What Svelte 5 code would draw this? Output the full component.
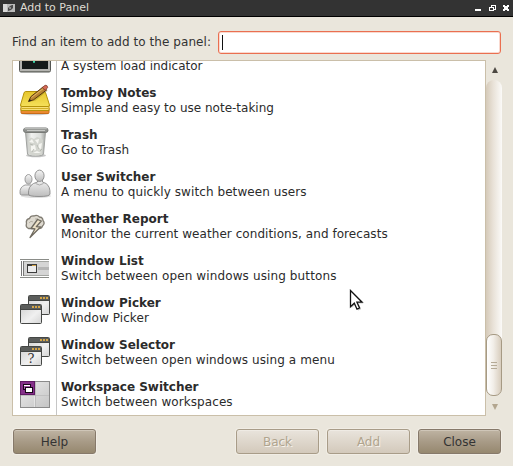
<script>
  const items = [
    { icon: 'monitor', title: '', sub: 'A system load indicator', track: 0 },
    { icon: 'notes', title: 'Tomboy Notes', sub: 'Simple and easy to use note-taking', track: 0 },
    { icon: 'trash', title: 'Trash', sub: 'Go to Trash', track: 0 },
    { icon: 'users', title: 'User Switcher', sub: 'A menu to quickly switch between users', track: 0.08 },
    { icon: 'weather', title: 'Weather Report', sub: 'Monitor the current weather conditions, and forecasts', track: 0.06 },
    { icon: 'winlist', title: 'Window List', sub: 'Switch between open windows using buttons', track: 0.12 },
    { icon: 'windows', title: 'Window Picker', sub: 'Window Picker', track: 0.08 },
    { icon: 'selector', title: 'Window Selector', sub: 'Switch between open windows using a menu', track: 0.09 },
    { icon: 'workspace', title: 'Workspace Switcher', sub: 'Switch between workspaces', track: 0.08 }
  ];
</script>

{#snippet win(x, y)}
  <rect x={x + 0.5} y={y + 0.5} width="21" height="19" rx="1" fill="url(#gWin)" stroke="#454745" />
  <path d="M{x + 1} {y + 1}h20v4h-20z" fill="#5b5d5b" />
  <path d="M{x + 1} {y + 5.5}h20" stroke="#454745" />
  <path d="M{x + 12} {y + 2}h2v2h-2zM{x + 15} {y + 2}h2v2h-2zM{x + 18} {y + 2}h2v2h-2z" fill="#d5a546" />
{/snippet}

<div class="window">
  <header>
    <svg class="appicon" width="12" height="8" viewBox="0 0 12 8">
      <rect width="12" height="8" fill="#b9b9b9" />
      <path d="M0 0h4v8H0z" fill="#d8d8d8" />
      <path d="M5 4l2-2 2-1h1v3L8 6 5 7z" fill="#4a4a4a" />
      <path d="M6 3h2v2H6z" fill="#8d8d8d" />
    </svg>
    <span>Add to Panel</span>
    <svg class="controls" width="34" height="9" viewBox="0 0 34 9" shape-rendering="crispEdges">
      <path d="M0 5h6v2H0z" fill="#fff" />
      <path fill-rule="evenodd" d="M16 1h5v5h-2v1h-5V3h2zM17 2v1h2v2h1V2zM15 4v2h3V4z" fill="#fff" />
      <path d="M28 1h2v1h2V1h2v2h-1v2h1v2h-2V6h-2v1h-2V5h1V3h-1z" fill="#fff" />
    </svg>
  </header>

  <div class="search">
    <label for="find">Find an item to add to the panel:</label>
    <div class="entry" id="find"><i></i></div>
  </div>

  <div class="listwrap">
    <div class="list">
      {#each items as it}
        <div class="row">
          <div class="ico">
            <svg width="32" height="32" viewBox="0 0 32 32">
              <defs>
                <linearGradient id="gWin" x1="0" y1="0" x2="1" y2="1"><stop offset="0" stop-color="#cfcfcf" /><stop offset=".6" stop-color="#f0f0f0" /><stop offset="1" stop-color="#d4d4d4" /></linearGradient>
                <linearGradient id="gUser" x1="0" y1="0" x2="0" y2="1"><stop offset="0" stop-color="#f5f5f5" /><stop offset="1" stop-color="#bdbdbd" /></linearGradient>
                <linearGradient id="gNote" x1="0" y1="0" x2="0" y2="1"><stop offset="0" stop-color="#e6c62c" /><stop offset="1" stop-color="#f5e05a" /></linearGradient>
                <linearGradient id="gCell" x1="0" y1="0" x2="1" y2="1"><stop offset="0" stop-color="#ececec" /><stop offset="1" stop-color="#c4c4c4" /></linearGradient>
                <linearGradient id="gGlass" x1="0" y1="0" x2="1" y2="0"><stop offset="0" stop-color="#b5b7b4" /><stop offset=".3" stop-color="#f1f2f0" /><stop offset=".75" stop-color="#dcdedb" /><stop offset="1" stop-color="#a4a6a3" /></linearGradient>
              </defs>
              {#if it.icon === 'monitor'}
                <rect x="0.5" y="2.5" width="31" height="27.5" rx="1.5" fill="#b4b4b0" stroke="#555753" />
                <rect x="3" y="5" width="26" height="22" fill="#151a19" />
                <path d="M11 18h3l1 3 1-3" fill="none" stroke="#3ad8a8" />
                <path d="M1 29.5h30" stroke="#73756f" />
              {:else if it.icon === 'notes'}
                <ellipse cx="16" cy="29.5" rx="14" ry="1.8" fill="#000" opacity=".2" />
                <path d="M2 24v4.500q0 1 1 1h26q1 0 1-1V24z" fill="#ea8a30" stroke="#c96c18" />
                <path d="M2 21v5.500h28V21z" fill="#f8e078" stroke="#b5930a" />
                <path d="M3 24.500h26" stroke="#d3b126" />
                <path d="M6.500 7.500h18.500q1 0 1.500 1L30.500 21q0 1.500-1.500 1.500H3Q1.500 22.500 1.500 21L5 9q.5-1.500 1.500-1.500z" fill="url(#gNote)" stroke="#b5930a" />
                <path d="M10 17l6-1.500L28 6" fill="none" stroke="#8b7a14" stroke-width="2" opacity=".4" />
                <path d="M9.500 17.500l2.300-4.800L24 3l3.500 3L14.500 15.800z" fill="#b98534" stroke="#4e2c08" stroke-width=".9" />
                <path d="M12.500 13.500L25 4" stroke="#e5b561" />
                <path d="M9.500 17.500l1.200-2.600 1.700 1.500z" fill="#222" />
                <path d="M23.300 3.500l2.800-2.200q2-.6 2.600 2l-2.400 3.200z" fill="#d46a57" stroke="#7c3326" stroke-width=".8" />
              {:else if it.icon === 'trash'}
                <ellipse cx="17" cy="29.500" rx="10" ry="1.800" fill="#000" opacity=".22" />
                <path d="M6.500 6l2 22q.3 2 8 2t8-2l2-22z" fill="url(#gGlass)" stroke="#a1a3a0" />
                <path d="M9 14l3-2.500 3 1.500 3-2 3 1 3 2-1 14.500q-6 1.800-12.500 0z" fill="#d3d5cf" />
                <path d="M10 16l3-3 2 4zM16 14l4-1-1 5zM12 20l4-1 1 5-5 1zM20 18l3-1-1 6-3-1zM14 27l4-2 4 2z" fill="#f5f5f1" />
                <path d="M11 18l3 1M18 19l2 4M13 26l2-3M21 25l2-2" stroke="#aeb1aa" stroke-width=".8" />
                <rect x="4.500" y="2" width="24.500" height="4.500" rx="2.200" fill="#8f918e" stroke="#737572" stroke-width=".9" />
                <path d="M6.500 1.500h20.500l1.500 1.700H5z" fill="#b8bab7" />
                <path d="M8 4.500h18" stroke="#c7c9c6" />
              {:else if it.icon === 'users'}
                <ellipse cx="17" cy="28" rx="15" ry="2" fill="#000" opacity=".12" />
                <path d="M1 25q-.5-6 5-8h6l4 3v7H2.500Q1 27 1 25z" fill="url(#gUser)" stroke="#929292" stroke-width=".9" />
                <ellipse cx="9.500" cy="11.300" rx="3.500" ry="4.800" fill="url(#gUser)" stroke="#929292" stroke-width=".9" />
                <path d="M9.500 26q-.5-7.500 5-10.500l4-1.500v-3h5v3l3.500 1.500q4.500 3 4 10.500 0 2.500-11 2.500T9.500 26z" fill="url(#gUser)" stroke="#898989" stroke-width=".9" />
                <ellipse cx="20.500" cy="7.800" rx="4.600" ry="5.700" fill="url(#gUser)" stroke="#898989" stroke-width=".9" />
                <path d="M16.500 15.500q4 3 8 0" fill="none" stroke="#a9a9a9" />
              {:else if it.icon === 'weather'}
                <path d="M9.500 18.500Q6.300 17 7.500 13.500 6.500 9.500 10.500 8.500 11.500 5.500 15 6q3-1.700 5.500 1 3.300.2 3.500 3.500 2.500 2.800-.5 5.500-.7 2.500-3.500 2.500z" fill="#dedad0" stroke="#807c72" stroke-width="1.300" />
                <path d="M10 13q2-3 4-1M16 9q3-1 4 1" fill="none" stroke="#b5b0a4" />
                <path d="M18.500 9.500L12 18.500l4 .3-5 8.700L21.500 17l-4.200-.3 5-5.700z" fill="#eee2c8" stroke="#706b60" stroke-width="1.300" stroke-linejoin="round" />
              {:else if it.icon === 'winlist'}
                <path d="M1 7.500h29M1 25.500h29" stroke="#8a8c88" />
                <path d="M5 9.500h25v14H5z" fill="#d5d5d5" />
                <path d="M5 9.500h25M5 23.500h25" stroke="#a4a6a2" />
                <path d="M2.500 9v15M4.500 9v15" stroke="#777" />
                <path d="M19 16.500h11" stroke="#b5b5b5" stroke-width="3" />
                <rect x="8.500" y="12.500" width="9" height="8" fill="#ededed" stroke="#3d3d3d" />
                <path d="M8 13h10" stroke="#3d3d3d" stroke-width="2" />
                <path d="M13 13.500h4" stroke="#d5a546" />
              {:else if it.icon === 'windows'}
                {@render win(9, 1)}
                {@render win(1, 10)}
              {:else if it.icon === 'selector'}
                {@render win(9, 1)}
                {@render win(1, 10)}
                <text x="12" y="27" text-anchor="middle" font-family="DejaVu Serif, serif" font-size="13" fill="#333">?</text>
              {:else}
                <rect x="1.500" y="3.500" width="29" height="26" fill="url(#gCell)" stroke="#8a8a8a" />
                <path d="M2 4h14v13H2z" fill="#85308a" />
                <rect x="1.500" y="3.500" width="14" height="13" fill="none" stroke="#5f1a63" />
                <path d="M16 17v12M16 17.500h14" stroke="#f6f6f6" />
                <path d="M16.500 4v25M2 17.500h28" stroke="#b4b4b4" stroke-width=".8" />
                <rect x="4.500" y="6.500" width="7" height="5" fill="#a55aa9" stroke="#1a061b" />
                <path d="M5 7.500h6" stroke="#fff" />
                <rect x="6.500" y="9.500" width="7" height="5" fill="#fff" stroke="#160517" />
              {/if}
            </svg>
          </div>
          <div class="txt"><b>{it.title}</b><span style="letter-spacing:{it.track}px">{it.sub}</span></div>
        </div>
      {/each}
    </div>
    <div class="scroll">
      <svg width="6" height="6" viewBox="0 0 6 6"><path d="M3 0l3 6H0z" fill="#4c4842" /></svg>
      <div class="trough"><div class="thumb"><i></i><i></i><i></i></div></div>
      <svg width="6" height="6" viewBox="0 0 6 6"><path d="M3 6l3-6H0z" fill="#b3a68f" /></svg>
    </div>
  </div>

  <footer>
    <button>Help</button>
    <span class="gap"></span>
    <button disabled>Back</button>
    <button disabled>Add</button>
    <button>Close</button>
  </footer>

  <svg class="cursor" width="16" height="24" viewBox="0 0 16 24">
    <path d="M2.500 3v16l4-3.500 2.700 6 3-1.300-2.700-5.700h5z" fill="#000" opacity=".2" />
    <path d="M1.500 1.500v16.200l3.800-3.500 2.700 6 2.600-1.200-2.700-5.800h5.200z" fill="#fff" stroke="#111" stroke-width="1.300" />
  </svg>
</div>

<style>
  :global(body) { margin: 0; }
  .window {
    position: relative;
    width: 513px;
    height: 466px;
    box-sizing: border-box;
    overflow: hidden;
    display: flex;
    flex-direction: column;
    background: #eae6dc;
    color: #333;
    font: 12px/15px "DejaVu Sans", sans-serif;
  }
  header {
    height: 17px;
    box-sizing: border-box;
    border-bottom: 1px solid #000;
    background: #333;
    display: flex;
    align-items: center;
    padding: 0 4px 0 3px;
    color: #dfdbd2;
    font-size: 11px;
    line-height: 15px;
    flex: none;
  }
  header span { flex: 1; margin-left: 5px; margin-top: -2px; }
  .search {
    display: flex;
    align-items: center;
    height: 24px;
    margin: 13px 12px 6px 12px;
    gap: 6px;
    flex: none;
  }
  label { white-space: nowrap; width: 200px; letter-spacing: 0.06px; }
  .entry {
    flex: 1;
    height: 23px;
    box-sizing: border-box;
    border: 1px solid #ea6f50;
    border-radius: 3px;
    background: #fff;
    box-shadow: inset 0 0 0 1px #f9d9cf;
    padding: 3px;
    display: flex;
  }
  .entry i { width: 1px; height: 15px; background: #111; }
  .listwrap { display: flex; height: 356px; margin: 0 11px 0 12px; flex: none; }
  .list {
    width: 474px;
    box-sizing: border-box;
    border: 1px solid #cabfa9;
    background: #fff;
    overflow: hidden;
    display: flex;
    flex-direction: column;
    justify-content: flex-end;
  }
  .row { display: flex; height: 42px; flex: none; }
  .ico {
    width: 44px;
    box-sizing: border-box;
    border-right: 1px solid #c6c6c6;
    padding: 5px 0 0 6px;
  }
  .ico svg { display: block; }
  .txt { display: flex; flex-direction: column; padding: 7px 0 0 4px; white-space: nowrap; color: #2b2b2b; }
  .txt b { height: 15px; }
  .scroll {
    width: 16px;
    box-sizing: border-box;
    display: flex;
    flex-direction: column;
    align-items: center;
    padding: 7px 0 6px;
  }
  .scroll svg { flex: none; margin-left: 1px; }
  .trough {
    flex: 1;
    width: 16px;
    margin: 7px 0 8px;
    box-sizing: border-box;
    border-radius: 8px;
    background: linear-gradient(90deg, #d5cab9, #e9e2d8 45%, #fbfaf8);
    display: flex;
    flex-direction: column;
    justify-content: flex-end;
  }
  .thumb {
    height: 62px;
    box-sizing: border-box;
    border: 1px solid #a69a84;
    border-radius: 7px;
    background: linear-gradient(90deg, #fff, #f2eee8 45%, #d8cdbd);
    display: flex;
    flex-direction: column;
    align-items: center;
    justify-content: center;
    gap: 2px;
  }
  .thumb i { width: 6px; height: 1px; background: #b5aa96; }
  footer { display: flex; gap: 8px; margin: 13px 12px 0 13px; }
  .gap { flex: 1; }
  button {
    width: 83px;
    height: 25px;
    box-sizing: border-box;
    padding: 1px 0 0;
    border: 1px solid #86796a;
    border-radius: 3px;
    background: linear-gradient(#bfb4a3, #a89b87 50%, #96886f);
    box-shadow: inset 0 1px 0 #cfc6b8, 0 0 0 1px #f1ede5;
    color: #333;
    font: 12px/15px "DejaVu Sans", sans-serif;
  }
  button:disabled {
    border-color: #a89c88;
    background: linear-gradient(#e9e4dc, #d3c9bb);
    box-shadow: inset 0 1px 0 #efebe4, 0 0 0 1px #f1ede5;
    color: #b0a48e;
    text-shadow: 1px 1px 0 #f7f3ec;
  }
  .cursor { position: absolute; left: 349px; top: 289px; }
</style>
